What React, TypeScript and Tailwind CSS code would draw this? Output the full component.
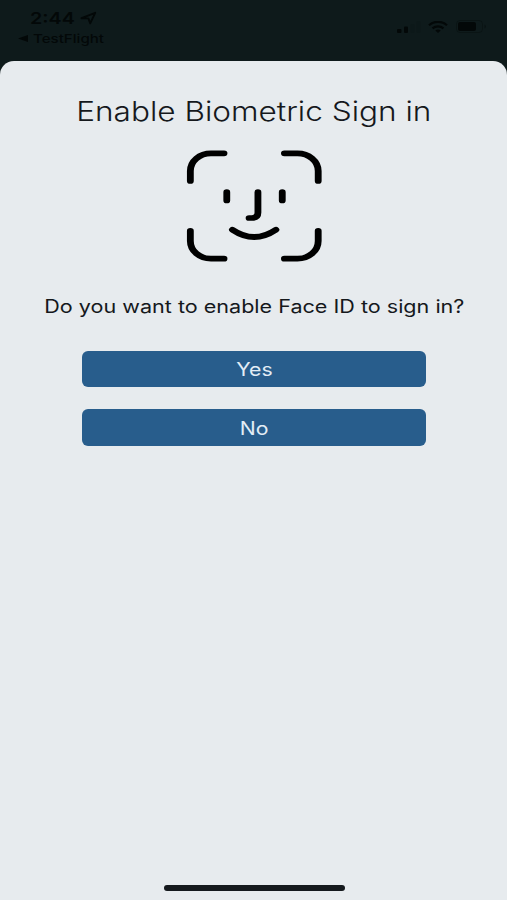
import React from "react";

function StatusBar() {
  return (
    <header className="flex h-[60.5px] shrink-0 justify-between pl-[18px] pr-[20px] text-[#030808]">
      <div className="pt-[9px]">
        <div className="flex items-center gap-[5px] pl-[12px]">
          <span className="w-[45px] whitespace-nowrap text-[16px] font-semibold leading-[18px]">
            <span className="inline-block origin-left scale-x-[1.23]">2:44</span>
          </span>
          <svg width="17" height="14" viewBox="0 0 17 14" fill="none" stroke="currentColor" strokeWidth="1.9" strokeLinejoin="round">
            <path d="M1.5 7.2 15.2 1.8 10.2 12.3 8.4 7.4Z" />
          </svg>
        </div>
        <div className="mt-[4px] flex items-center gap-[5px]">
          <svg width="10" height="7" viewBox="0 0 10 7" fill="currentColor">
            <path d="M0 3.5 10 0V7Z" />
          </svg>
          <span className="origin-left scale-x-[1.26] whitespace-nowrap text-[12px] font-medium leading-[15px]">
            TestFlight
          </span>
        </div>
      </div>

      <div className="mt-[20px] flex h-[13px] items-center">
        <svg width="24" height="12" viewBox="0 0 24 12" fill="currentColor">
          <rect x="0" y="8" width="4.5" height="4" rx="1" />
          <rect x="7" y="5.5" width="4" height="6.5" rx="1" />
          <rect x="13.5" y="3" width="4" height="9" rx="1" opacity=".08" />
          <rect x="19.5" y="0" width="4" height="12" rx="1" opacity=".08" />
        </svg>
        <svg className="ml-[7px]" width="20" height="12" viewBox="0 0 20 12" fill="none" stroke="currentColor" strokeWidth="2.2">
          <path d="M1 4.3C6-.4 14-.4 19 4.3M4.5 7.4c3.2-2.8 7.8-2.8 11 0" />
          <path d="M7.3 9.5c1.6-1.3 3.8-1.3 5.4 0L10 12Z" fill="currentColor" stroke="none" />
        </svg>
        <svg className="ml-[8px]" width="31" height="13" viewBox="0 0 31 13" fill="currentColor">
          <rect x=".5" y=".5" width="26" height="12" rx="3.5" fill="none" stroke="currentColor" opacity=".3" />
          <rect x="2" y="2" width="18" height="9" rx="2" />
          <path d="M28.5 4.5c2 .8 2 3.2 0 4Z" opacity=".4" />
        </svg>
      </div>
    </header>
  );
}

function FaceIdIcon() {
  return (
    <svg
      className="mt-[18.5px] h-[116px] w-[139px] shrink-0"
      viewBox="0 0 116 116"
      preserveAspectRatio="none"
      fill="none"
      stroke="#000"
      strokeWidth="5.7"
      strokeLinecap="round"
      strokeLinejoin="round"
    >
      {/* frame corners */}
      <path d="M5.3 32.9V23C5.3 13 13 5.3 22.5 5.3H33.4" />
      <path d="M83.8 5.3H94.7C104.2 5.3 112 13 112 23V32.9" />
      <path d="M5.3 82.8V93C5.3 103 13 110.7 22.5 110.7H33.4" />
      <path d="M83.8 110.7H94.7C104.2 110.7 112 103 112 93V82.8" />
      {/* face */}
      <path d="M35.7 44.2V52.5M82 44.2V52.5" />
      <path d="M61.7 44.2V64.5Q61.7 70 56.5 70H54.3" />
      <path d="M40.4 81.7Q58.5 96.3 76.7 81.7" />
    </svg>
  );
}

function ActionButton({ label }: { label: string }) {
  return (
    <button className="flex h-[36.5px] w-[344.5px] items-center justify-center rounded-[6px] bg-[#285d8c] pt-[2px] text-[18px] text-[#e3edf6]">
      <span className="scale-x-[1.18]">{label}</span>
    </button>
  );
}

export default function App() {
  return (
    <div className="flex h-[900px] w-[507px] flex-col overflow-hidden bg-[#0e1a1b] font-['Inter','Liberation_Sans',sans-serif]">
      <StatusBar />

      <main className="flex flex-1 flex-col items-center rounded-t-[14px] bg-[#e7ebee] text-[#15181c]">
        <h1 className="mt-[32.5px] scale-x-[1.147] whitespace-nowrap text-[27.5px] font-light leading-[36px]">
          Enable Biometric Sign in
        </h1>

        <FaceIdIcon />

        <p className="ml-[1px] mt-[31.5px] scale-x-[1.198] whitespace-nowrap text-[18px] leading-[24px]">
          Do you want to enable Face ID to sign in?
        </p>

        <div className="ml-[1px] mt-[31.5px] flex flex-col gap-[22px]">
          <ActionButton label="Yes" />
          <ActionButton label="No" />
        </div>

        <div className="mb-[9px] ml-[1px] mt-auto h-[6px] w-[181px] rounded-full bg-[#15191d]" />
      </main>
    </div>
  );
}
